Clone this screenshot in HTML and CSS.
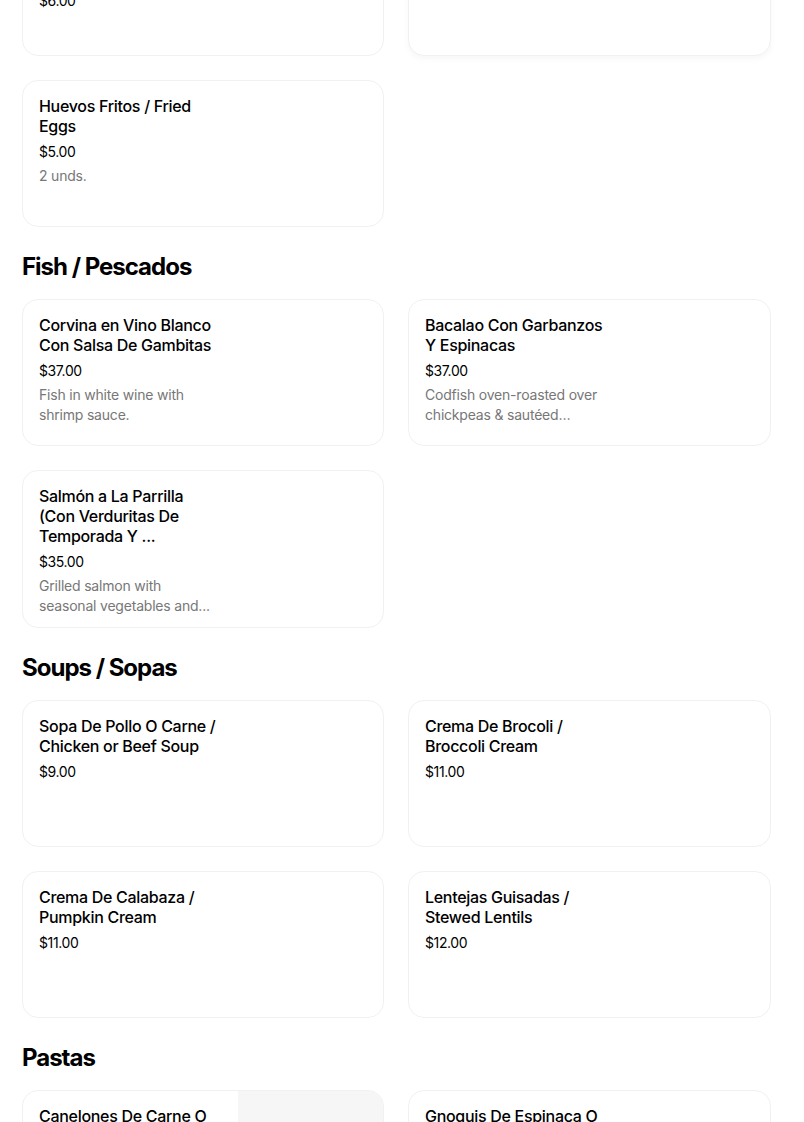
FILE: index.html
```html
<!DOCTYPE html>
<html lang="es">
<head>
<meta charset="utf-8">
<title>Menu</title>
<link rel="stylesheet" href="styles.css">
</head>
<body>
<main class="menu">
  <section class="section section-scrolled">
    <div class="grid">
      <article class="card">
        <div class="card-text">
          <h4 class="item-title">Tortilla Española Con Chorizo / Spanish Omelette</h4>
          <div class="item-price">$6.00</div>
        </div>
      </article>
      <article class="card card-raised">
        <div class="card-text">
          <h4 class="item-title">Pan Con Tomate / Tomato Bread</h4>
          <div class="item-price">$4.00</div>
        </div>
      </article>
      <article class="card">
        <div class="card-text">
          <h4 class="item-title">Huevos Fritos / Fried Eggs</h4>
          <div class="item-price">$5.00</div>
          <p class="item-desc">2 unds.</p>
        </div>
      </article>
    </div>
  </section>

  <section class="section">
    <h3 class="section-title">Fish / Pescados</h3>
    <div class="grid">
      <article class="card">
        <div class="card-text">
          <h4 class="item-title">Corvina en Vino Blanco Con Salsa De Gambitas</h4>
          <div class="item-price">$37.00</div>
          <p class="item-desc">Fish in white wine with shrimp sauce.</p>
        </div>
      </article>
      <article class="card">
        <div class="card-text">
          <h4 class="item-title">Bacalao Con Garbanzos Y Espinacas</h4>
          <div class="item-price">$37.00</div>
          <p class="item-desc">Codfish oven-roasted over chickpeas &amp; sautéed spinach with garlic.</p>
        </div>
      </article>
      <article class="card">
        <div class="card-text">
          <h4 class="item-title">Salmón a La Parrilla (Con Verduritas De Temporada Y ...</h4>
          <div class="item-price">$35.00</div>
          <p class="item-desc">Grilled salmon with seasonal vegetables and...</p>
        </div>
      </article>
    </div>
  </section>

  <section class="section">
    <h3 class="section-title">Soups / Sopas</h3>
    <div class="grid">
      <article class="card">
        <div class="card-text">
          <h4 class="item-title">Sopa De Pollo O Carne / Chicken or Beef Soup</h4>
          <div class="item-price">$9.00</div>
        </div>
      </article>
      <article class="card">
        <div class="card-text">
          <h4 class="item-title">Crema De Brocoli / Broccoli Cream</h4>
          <div class="item-price">$11.00</div>
        </div>
      </article>
      <article class="card">
        <div class="card-text">
          <h4 class="item-title">Crema De Calabaza / Pumpkin Cream</h4>
          <div class="item-price">$11.00</div>
        </div>
      </article>
      <article class="card">
        <div class="card-text">
          <h4 class="item-title">Lentejas Guisadas / Stewed Lentils</h4>
          <div class="item-price">$12.00</div>
        </div>
      </article>
    </div>
  </section>

  <section class="section">
    <h3 class="section-title">Pastas</h3>
    <div class="grid">
      <article class="card">
        <div class="card-text">
          <h4 class="item-title">Canelones De Carne O Espinacas / Meat or Spinach Cannelloni</h4>
          <div class="item-price">$18.00</div>
        </div>
        <div class="card-image"></div>
      </article>
      <article class="card">
        <div class="card-text">
          <h4 class="item-title">Gnoquis De Espinaca O Patata / Spinach or Potato Gnocchi</h4>
          <div class="item-price">$18.00</div>
        </div>
      </article>
    </div>
  </section>
</main>
</body>
</html>
```

FILE: styles.css
```css
* {
  box-sizing: border-box;
}

html, body {
  margin: 0;
  padding: 0;
  background: #ffffff;
}

body {
  font-family: Inter, "Noto Sans", "Liberation Sans", sans-serif;
  color: #000000;
  overflow: hidden;
}

.menu {
  padding: 0 33px 0 22px;
}

.section-scrolled {
  margin-top: -91px;
}

.section-title {
  margin: 24px 0 16px;
  font-size: 24px;
  line-height: 32px;
  font-weight: 700;
  letter-spacing: -1px;
}

.grid {
  display: grid;
  grid-template-columns: 362px 363px;
  column-gap: 24px;
  row-gap: 24px;
}

.card {
  display: flex;
  min-height: 147px;
  border: 1px solid #f1f1f1;
  border-radius: 16px;
  overflow: hidden;
  background: #ffffff;
}

.card-raised {
  box-shadow: 0 3px 6px rgba(0, 0, 0, 0.035);
}

.card-text {
  flex: 0 0 auto;
  width: 215px;
  padding: 15px 16px 11px 16px;
}

.card-image {
  flex: 1 1 auto;
  align-self: stretch;
  background: #f6f6f6;
}

.item-title {
  margin: 0;
  font-size: 16px;
  line-height: 20px;
  font-weight: 500;
  letter-spacing: -0.3px;
  color: #000000;
  display: -webkit-box;
  -webkit-box-orient: vertical;
  -webkit-line-clamp: 3;
  overflow: hidden;
}

.item-price {
  margin-top: 6px;
  font-size: 14px;
  line-height: 20px;
  font-weight: 400;
  letter-spacing: -0.4px;
  color: #000000;
}

.item-desc {
  margin: 4px 0 0;
  font-size: 14px;
  line-height: 20px;
  letter-spacing: -0.2px;
  color: #777777;
  display: -webkit-box;
  -webkit-box-orient: vertical;
  -webkit-line-clamp: 2;
  overflow: hidden;
}
```
